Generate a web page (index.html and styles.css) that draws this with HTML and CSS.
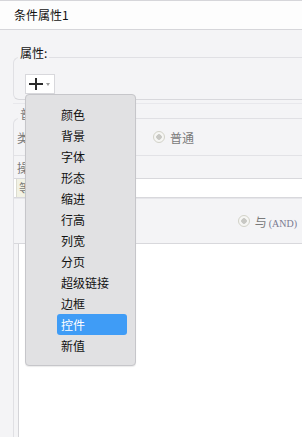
FILE: index.html
```html
<!DOCTYPE html>
<html>
    <head>
        <title>条件属性</title>
        <link rel="stylesheet" href="styles.css">
    </head>
    <body>
        <div class="titlebar">条件属性1</div>

        <div class="main">
            <div class="group attr-group">
                <span class="legend">属性:</span>
                <button class="add-button">
                    <svg class="plus" width="14" height="14" viewBox="0 0 14 14">
                        <path d="M0 7H14M7 1V13" stroke="#2a2a2a" stroke-width="2" fill="none"/>
                    </svg>
                    <span class="caret"></span>
                </button>
            </div>
            <div class="divider"></div>

            <div class="group normal-group">
                <span class="legend gray">普通属性</span>
                <div class="row type-row">
                    <span class="label">类型</span>
                    <label class="radio"><span class="dot"></span>普通</label>
                </div>
                <div class="row op-row">
                    <span class="label">操作</span>
                </div>
                <div class="input-strip">
                    <span class="op-select">等于</span>
                </div>
                <div class="row logic-row">
                    <label class="radio"><span class="dot"></span><span>与<span class="latin">(AND)</span></span></label>
                </div>
                <div class="list-panel"></div>
            </div>
        </div>

        <ul class="menu">
            <li class="menu-item">颜色</li>
            <li class="menu-item">背景</li>
            <li class="menu-item">字体</li>
            <li class="menu-item">形态</li>
            <li class="menu-item">缩进</li>
            <li class="menu-item">行高</li>
            <li class="menu-item">列宽</li>
            <li class="menu-item">分页</li>
            <li class="menu-item">超级链接</li>
            <li class="menu-item">边框</li>
            <li class="menu-item active">控件</li>
            <li class="menu-item">新值</li>
        </ul>
    </body>
</html>
```

FILE: styles.css
```css
html, body {
    margin: 0;
    height: 100%;
    overflow: hidden;
}

body {
    position: relative;
    background-color: #f4f4f6;
    font-family: "Noto Sans CJK SC", "Noto Sans", sans-serif;
    font-size: 12px;
    color: #111;
}

.titlebar {
    height: 28px;
    line-height: 28px;
    padding-left: 14px;
    background-color: #fdfdfd;
    border-top: 1px solid #d6d6da;
    border-bottom: 1px solid #d6d6da;
}

.main {
    padding-top: 27px;
    padding-left: 13px;
}

.group {
    position: relative;
    border-top: 1px solid #e0e0e4;
    border-left: 1px solid #e0e0e4;
    border-top-left-radius: 6px;
}

.legend {
    position: absolute;
    top: -12px;
    left: 4px;
    padding: 0 2px;
    line-height: 14px;
    background-color: #f4f4f6;
}

.gray {
    color: #7a7a7a;
}

.attr-group {
    height: 43px;
    padding: 16px 0 0 11px;
    box-sizing: border-box;
    border-bottom: 1px solid #d8d8dc;
    border-bottom-left-radius: 6px;
}

.add-button {
    display: flex;
    align-items: center;
    gap: 3px;
    width: 30px;
    height: 20px;
    padding: 0 0 0 3px;
    background-color: #fff;
    border: 1px solid #d8d8dc;
    cursor: pointer;
}

.caret {
    width: 0;
    height: 0;
    border-left: 2.5px solid transparent;
    border-right: 2.5px solid transparent;
    border-top: 3px solid #999;
}

.divider {
    height: 1px;
    margin-top: 3px;
    background-color: #e8e8ec;
}

.normal-group {
    margin-top: 14px;
}

.row {
    display: flex;
    align-items: center;
    padding-left: 3px;
}

.label {
    width: 136px;
    color: #7a7a7a;
}

.type-row {
    height: 36px;
    border-bottom: 1px solid #e2e2e6;
}

.op-row {
    height: 22px;
}

.input-strip {
    height: 18px;
    background-color: #fff;
    border-top: 1px solid #d8d8dc;
    border-bottom: 1px solid #d8d8dc;
    padding-left: 2px;
}

.op-select {
    display: inline-block;
    width: 44px;
    height: 18px;
    line-height: 18px;
    padding-left: 2px;
    background-color: #f2f2e4;
    border-left: 1px solid #dcdcd0;
    border-right: 1px solid #dcdcd0;
    color: #7a7a7a;
}

.radio {
    display: flex;
    align-items: center;
    gap: 5px;
    color: #7a7a7a;
}

.dot {
    width: 10px;
    height: 10px;
    border: 1px solid #d2d2c8;
    border-radius: 50%;
    background: radial-gradient(circle, #c8c8c4 0 2.5px, #f6f6f4 3px);
}

.latin {
    font-family: "Liberation Serif", serif;
    font-size: 10px;
    color: #7a7a90;
    margin-left: 2px;
}

.logic-row {
    height: 44px;
    justify-content: flex-end;
    padding-right: 5px;
    border-top: 1px solid #e6e6ea;
    border-bottom: 1px solid #d8d8dc;
}

.list-panel {
    margin-left: 4px;
    height: 200px;
    background-color: #fff;
    border-left: 1px solid #d4d4d8;
}

.menu {
    position: absolute;
    top: 94px;
    left: 25px;
    width: 111px;
    height: 272px;
    margin: 0;
    padding: 9px 0 0 0;
    box-sizing: border-box;
    list-style: none;
    background-color: #e1e1e3;
    border: 1px solid #c6c6ca;
    border-radius: 4px;
    box-shadow: 0 1px 1px rgba(0, 0, 0, 0.08);
}

.menu-item {
    width: 70px;
    margin-left: 31px;
    padding-left: 4px;
    box-sizing: border-box;
    height: 21px;
    line-height: 21px;
    border-radius: 3px;
    color: #111;
}

.menu-item.active {
    background-color: #3f9cf6;
    color: #fff;
}
```
